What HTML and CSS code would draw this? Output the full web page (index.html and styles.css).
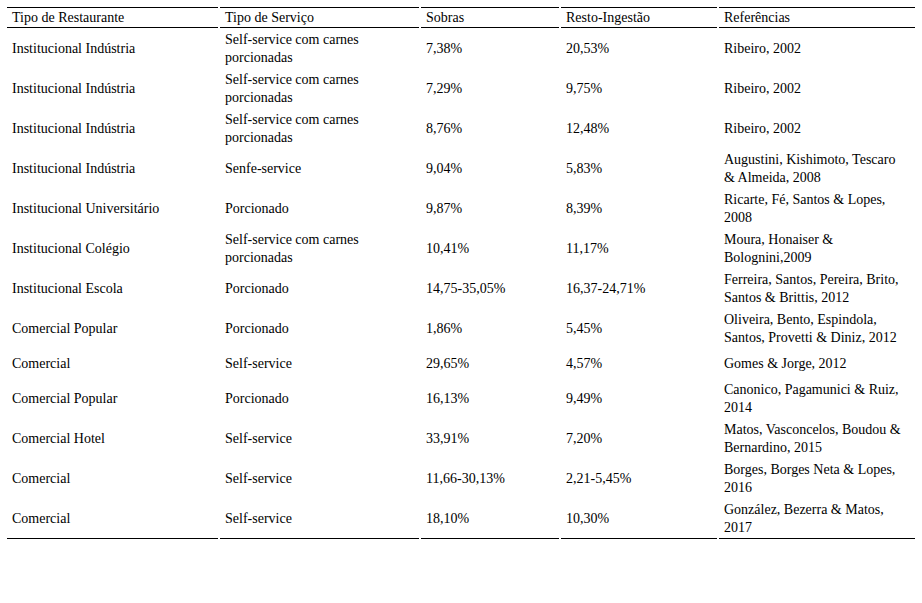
FILE: index.html
```html
<!DOCTYPE html>
<html lang="pt">
<head>
<meta charset="utf-8">
<title>Tabela</title>
<link rel="stylesheet" href="styles.css">
</head>
<body>
<table class="data">
  <colgroup>
    <col class="c1"><col class="c2"><col class="c3"><col class="c4"><col class="c5">
  </colgroup>
  <thead>
    <tr><th>Tipo de Restaurante</th><th>Tipo de Serviço</th><th>Sobras</th><th>Resto-Ingestão</th><th>Referências</th></tr>
  </thead>
  <tbody>
    <tr><td>Institucional Indústria</td><td>Self-service com carnes<br>porcionadas</td><td>7,38%</td><td>20,53%</td><td>Ribeiro, 2002</td></tr>
    <tr><td>Institucional Indústria</td><td>Self-service com carnes<br>porcionadas</td><td>7,29%</td><td>9,75%</td><td>Ribeiro, 2002</td></tr>
    <tr><td>Institucional Indústria</td><td>Self-service com carnes<br>porcionadas</td><td>8,76%</td><td>12,48%</td><td>Ribeiro, 2002</td></tr>
    <tr><td>Institucional Indústria</td><td>Senfe-service</td><td>9,04%</td><td>5,83%</td><td>Augustini, Kishimoto, Tescaro<br>&amp; Almeida, 2008</td></tr>
    <tr><td>Institucional Universitário</td><td>Porcionado</td><td>9,87%</td><td>8,39%</td><td>Ricarte, Fé, Santos &amp; Lopes,<br>2008</td></tr>
    <tr><td>Institucional Colégio</td><td>Self-service com carnes<br>porcionadas</td><td>10,41%</td><td>11,17%</td><td>Moura, Honaiser &amp;<br>Bolognini,2009</td></tr>
    <tr><td>Institucional Escola</td><td>Porcionado</td><td>14,75-35,05%</td><td>16,37-24,71%</td><td>Ferreira, Santos, Pereira, Brito,<br>Santos &amp; Brittis, 2012</td></tr>
    <tr><td>Comercial Popular</td><td>Porcionado</td><td>1,86%</td><td>5,45%</td><td>Oliveira, Bento, Espindola,<br>Santos, Provetti &amp; Diniz, 2012</td></tr>
    <tr><td>Comercial</td><td>Self-service</td><td>29,65%</td><td>4,57%</td><td>Gomes &amp; Jorge, 2012</td></tr>
    <tr><td>Comercial Popular</td><td>Porcionado</td><td>16,13%</td><td>9,49%</td><td>Canonico, Pagamunici &amp; Ruiz,<br>2014</td></tr>
    <tr><td>Comercial Hotel</td><td>Self-service</td><td>33,91%</td><td>7,20%</td><td>Matos, Vasconcelos, Boudou &amp;<br>Bernardino, 2015</td></tr>
    <tr><td>Comercial</td><td>Self-service</td><td>11,66-30,13%</td><td>2,21-5,45%</td><td>Borges, Borges Neta &amp; Lopes,<br>2016</td></tr>
    <tr class="last"><td>Comercial</td><td>Self-service</td><td>18,10%</td><td>10,30%</td><td>González, Bezerra &amp; Matos,<br>2017</td></tr>
  </tbody>
</table>
</body>
</html>
```

FILE: styles.css
```css
html, body {
  margin: 0;
  padding: 0;
  background: #fff;
}

body {
  font-family: "Liberation Serif", "Times New Roman", serif;
  font-size: 14px;
  color: #000;
}

.data {
  margin: 7px 0 0 5px;
  width: 912px;
  table-layout: fixed;
  border-collapse: separate;
  border-spacing: 2px 0;
}

.c1 { width: 211px; }
.c2 { width: 199px; }
.c3 { width: 138px; }
.c4 { width: 156px; }
.c5 { width: 196px; }

.data th,
.data td {
  text-align: left;
  white-space: nowrap;
  vertical-align: middle;
  font-weight: normal;
}

.data th {
  padding: 0 5px;
  height: 19px;
  line-height: 19px;
  border-top: 1px solid #000;
  border-bottom: 1px solid #000;
}

.data td {
  padding: 3px 5px 1px;
  line-height: 18px;
}

.data tbody tr {
  height: 30px;
}

.data tr.last td {
  border-bottom: 1px solid #000;
}
```
